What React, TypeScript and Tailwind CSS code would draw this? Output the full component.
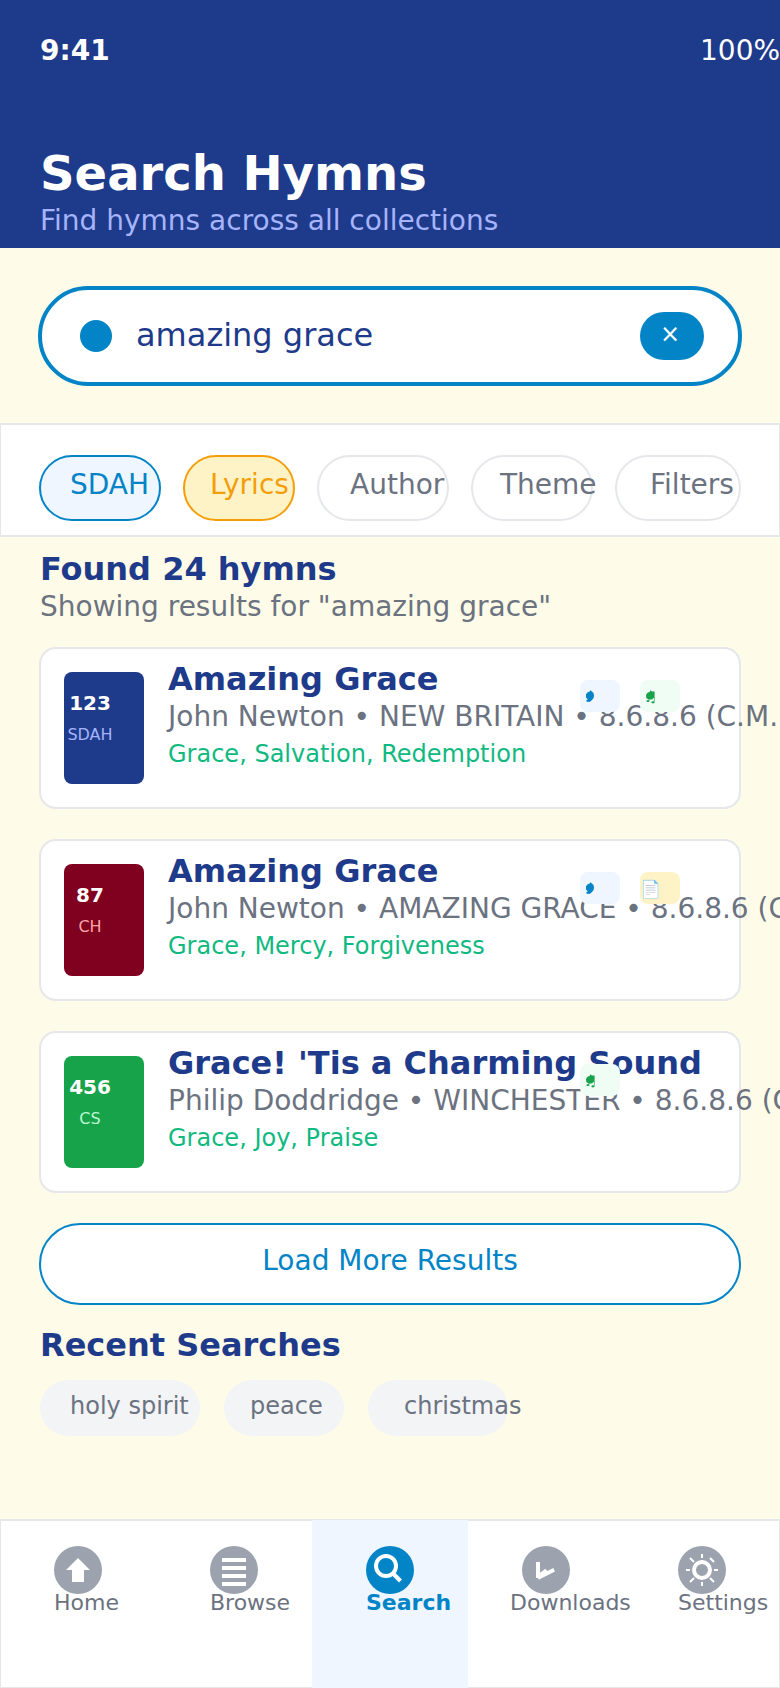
import type { ReactNode } from "react";

type Chip = { label: string; box: string };
type ActionKind = "audio" | "score" | "text";
type Hymn = {
  number: string;
  book: string;
  badge: string;
  bookColor: string;
  title: string;
  meta: string;
  tags: string;
  actions: ActionKind[];
};

const filters: Chip[] = [
  { label: "SDAH", box: "w-[122px] pl-[29px] border-[#0284c7] bg-[#eff6ff] text-[#0284c7]" },
  { label: "Lyrics", box: "w-[112px] pl-[25px] border-[#f59e0b] bg-[#fef3c7] text-[#f59e0b]" },
  { label: "Author", box: "w-[132px] pl-[31px] border-[#e5e7eb] bg-white text-[#6b7280]" },
  { label: "Theme", box: "w-[122px] pl-[27px] border-[#e5e7eb] bg-white text-[#6b7280]" },
  { label: "Filters", box: "w-[126px] pl-[33px] border-[#e5e7eb] bg-white text-[#6b7280]" },
];

const hymns: Hymn[] = [
  {
    number: "123",
    book: "SDAH",
    badge: "bg-[#1e3a8a]",
    bookColor: "text-[#a5b4fc]",
    title: "Amazing Grace",
    meta: "John Newton • NEW BRITAIN • 8.6.8.6 (C.M.)",
    tags: "Grace, Salvation, Redemption",
    actions: ["audio", "score"],
  },
  {
    number: "87",
    book: "CH",
    badge: "bg-[#800020]",
    bookColor: "text-[#fca5a5]",
    title: "Amazing Grace",
    meta: "John Newton • AMAZING GRACE • 8.6.8.6 (C.M.)",
    tags: "Grace, Mercy, Forgiveness",
    actions: ["audio", "text"],
  },
  {
    number: "456",
    book: "CS",
    badge: "bg-[#16a34a]",
    bookColor: "text-[#bbf7d0]",
    title: "Grace! 'Tis a Charming Sound",
    meta: "Philip Doddridge • WINCHESTER • 8.6.8.6 (C.M.)",
    tags: "Grace, Joy, Praise",
    actions: ["score"],
  },
];

const recent: Chip[] = [
  { label: "holy spirit", box: "w-40 pl-[30px]" },
  { label: "peace", box: "w-30 pl-[26px]" },
  { label: "christmas", box: "w-35 pl-[36px]" },
];

function ActionTile({ kind }: { kind: ActionKind }) {
  if (kind === "text") {
    return <span className="h-8 w-10 rounded-lg bg-[#fef3c7] pt-[3px] text-[17px] leading-7">📄</span>;
  }
  if (kind === "audio") {
    return (
      <svg viewBox="0 0 40 32" className="h-8 w-10 rounded-lg bg-[#eff6ff] text-[#0284c7]">
        <path d="M10.300 10.300 12 11.600 13.600 13.200 14 15.500 13.600 18 11.800 20.300 9.500 22 6.700 21.700 6.300 20.300 7.700 19.300 6 17.500 6 14.200 7.700 12.300 9.700 11.600z" fill="currentColor" />
      </svg>
    );
  }
  return (
    <svg viewBox="0 0 40 32" className="h-8 w-10 rounded-lg bg-[#f0fdf4] text-[#16a34a]">
      <path d="M10.300 10.300 12 11.600H14.600V21.600H13.900V17.600L12.300 19.300 10.800 19.600 8.800 19.800 6.300 18 6 15.200 7 13.200 8.500 12.300 9.700 12z" fill="currentColor" />
      <ellipse cx="8" cy="21" rx="1.600" ry="1" fill="currentColor" />
      <ellipse cx="13" cy="22.300" rx="1.700" ry="1.100" fill="currentColor" />
    </svg>
  );
}

function HymnCard({ hymn }: { hymn: Hymn }) {
  return (
    <article className="relative flex h-[162px] items-start gap-6 rounded-[17px] border-2 border-[#e5e7eb] bg-white pl-[23px]">
      <div className={`mt-[23px] h-28 w-20 shrink-0 rounded-lg pr-7 pt-[19px] text-center ${hymn.badge}`}>
        <div className="text-[20px] leading-6 font-bold text-white">{hymn.number}</div>
        <div className={`mt-[10px] text-[16px] leading-[19px] ${hymn.bookColor}`}>{hymn.book}</div>
      </div>
      <div className="pt-[11px] whitespace-nowrap">
        <h3 className="text-[32px] leading-[38px] font-bold text-[#1e3a8a]">{hymn.title}</h3>
        <p className="mt-[2px] text-[28px] leading-[33px] text-[#6b7280]">{hymn.meta}</p>
        <p className="mt-[7px] text-[24px] leading-7 text-[#10b981]">{hymn.tags}</p>
      </div>
      <div className="absolute top-[31px] left-[539px] flex gap-5">
        {hymn.actions.map((kind) => (
          <ActionTile key={kind} kind={kind} />
        ))}
      </div>
    </article>
  );
}

type NavItemProps = { label: string; cell: string; text: string; disc: string; children: ReactNode };

function NavItem({ label, cell, text, disc, children }: NavItemProps) {
  return (
    <div className={`flex h-[168px] flex-col ${cell}`}>
      <svg viewBox="0 0 48 48" className={`h-12 w-12 shrink-0 ${disc}`}>
        <circle cx="24" cy="24" r="24" fill="currentColor" />
        {children}
      </svg>
      <span className={`-mt-1 text-[22px] leading-[25px] whitespace-nowrap ${text}`}>{label}</span>
    </div>
  );
}

export default function App() {
  return (
    <div className="h-[1688px] w-[780px] overflow-hidden bg-[#fefce8] font-['DejaVu_Sans',sans-serif]">
      <header className="h-[248px] bg-[#1e3a8a] pt-[34px] pl-10 text-white">
        <div className="flex justify-between text-[28px] leading-[33px]">
          <span className="font-bold">9:41</span>
          <span className="w-20 whitespace-nowrap">100%</span>
        </div>
        <h1 className="mt-[78px] text-[48px] leading-[56px] font-bold">Search Hymns</h1>
        <p className="mt-[3px] text-[28px] leading-[33px] text-[#a5b4fc]">Find hymns across all collections</p>
      </header>

      <div className="mx-[38px] mt-[38px] flex h-[100px] items-center rounded-[50px] border-4 border-[#0284c7] bg-white pr-[34px] pl-[38px]">
        <span className="h-8 w-8 rounded-full bg-[#0284c7]" />
        <span className="ml-6 pb-[2px] text-[32px] leading-[38px] text-[#1e3a8a]">amazing grace</span>
        <button className="ml-auto h-12 w-16 rounded-full bg-[#0284c7] pb-1 pl-5 text-left text-[24px] leading-none text-white">×</button>
      </div>

      <div className="mt-[37px] flex h-[114px] gap-[22px] border-x border-y-2 border-[#e5e7eb] bg-white pt-[30px] pl-[38px]">
        {filters.map((f) => (
          <div key={f.label} className={`h-[66px] shrink-0 rounded-[33px] border-2 pt-[11px] text-[28px] leading-[33px] whitespace-nowrap ${f.box}`}>
            {f.label}
          </div>
        ))}
      </div>

      <main className="px-[39px] pt-[13px]">
        <div className="pl-px">
          <h2 className="text-[32px] leading-[38px] font-bold text-[#1e3a8a]">Found 24 hymns</h2>
          <p className="mt-[2px] text-[28px] leading-[33px] text-[#6b7280]">Showing results for "amazing grace"</p>
        </div>
        <div className="mt-6 flex flex-col gap-[30px]">
          {hymns.map((h) => (
            <HymnCard key={h.number} hymn={h} />
          ))}
          <button className="h-[82px] rounded-[41px] border-2 border-[#0284c7] bg-white pb-[7px] text-[28px] leading-[33px] text-[#0284c7]">
            Load More Results
          </button>
        </div>
        <section className="mt-[21px] pl-px">
          <h2 className="text-[32px] leading-[38px] font-bold text-[#1e3a8a]">Recent Searches</h2>
          <div className="mt-4 flex gap-6">
            {recent.map((r) => (
              <span key={r.label} className={`h-14 shrink-0 rounded-full bg-[#f3f4f6] pt-3 text-[24px] leading-7 whitespace-nowrap text-[#6b7280] ${r.box}`}>
                {r.label}
              </span>
            ))}
          </div>
        </section>
      </main>

      <nav className="mt-[83px] grid grid-cols-5 border-t border-[#e5e7eb] bg-white">
        <NavItem label="Home" cell="border-y border-l border-[#e5e7eb] pt-[25px]" text="pl-[53px] text-[#6b7280]" disc="ml-[53px] text-[#9ca3af]">
          <path d="M24 12 36 24h-6v12H18V24h-6z" fill="#fff" />
        </NavItem>
        <NavItem label="Browse" cell="border-y border-[#e5e7eb] pt-[25px]" text="pl-[54px] text-[#6b7280]" disc="ml-[54px] text-[#9ca3af]">
          <path d="M12 12h24v4H12zM12 20h24v4H12zM12 28h24v4H12zM12 36h24v4H12z" fill="#fff" />
        </NavItem>
        <NavItem label="Search" cell="bg-[#eff6ff] pt-[26px]" text="pl-[54px] font-bold text-[#0284c7]" disc="ml-[54px] text-[#0284c7]">
          <circle cx="20" cy="20" r="10" fill="none" stroke="#fff" strokeWidth="4" />
          <path d="m26.500 27 8 8" stroke="#fff" strokeWidth="4" />
        </NavItem>
        <NavItem label="Downloads" cell="border-y border-[#e5e7eb] pt-[25px]" text="pl-[42px] text-[#6b7280]" disc="ml-[54px] text-[#9ca3af]">
          <path d="M14 16h4v10.700l5.300-4 2 2.300 6-3 1.700 3.500-16.300 8.200-.7-1.700h-2z" fill="#fff" />
        </NavItem>
        <NavItem label="Settings" cell="border-y border-r border-[#e5e7eb] pt-[25px]" text="pl-[54px] text-[#6b7280]" disc="ml-[54px] text-[#9ca3af]">
          <circle cx="24" cy="24" r="8" fill="none" stroke="#fff" strokeWidth="4" />
          <path d="M24 8v4M24 36v4M8 24h4M36 24h4M12 12l4 4M32 12l4 4M12 36l4-4M32 32l4 4" stroke="#fff" strokeWidth="2" />
        </NavItem>
      </nav>
    </div>
  );
}
